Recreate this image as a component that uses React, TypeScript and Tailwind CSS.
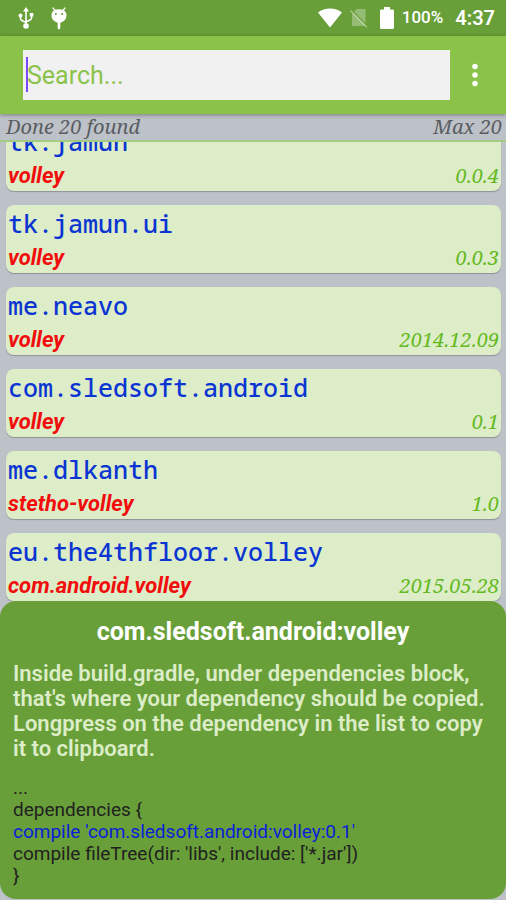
import { MdMoreVert } from 'react-icons/md';

type Dependency = { group: string; artifact: string; version: string };

const results: Dependency[] = [
  { group: 'tk.jamun', artifact: 'volley', version: '0.0.4' },
  { group: 'tk.jamun.ui', artifact: 'volley', version: '0.0.3' },
  { group: 'me.neavo', artifact: 'volley', version: '2014.12.09' },
  { group: 'com.sledsoft.android', artifact: 'volley', version: '0.1' },
  { group: 'me.dlkanth', artifact: 'stetho-volley', version: '1.0' },
  { group: 'eu.the4thfloor.volley', artifact: 'com.android.volley', version: '2015.05.28' },
];

function UsbIcon() {
  return (
    <svg width="16" height="24" viewBox="0 0 16 24" fill="none" aria-hidden="true">
      <path d="M8 5v15M2.500 10v2.500c0 1 .5 1.700 1.500 2L8 16.500M13.500 9v3c0 1-.5 1.500-1.500 2L8 16" stroke="white" strokeWidth="1.600" />
      <path d="M8 1l3 4.500H5z" fill="white" />
      <circle cx="2.500" cy="9.500" r="2" fill="white" />
      <path d="M11.700 7h3.600v3.600h-3.600z" fill="white" />
      <circle cx="8" cy="20" r="2.800" fill="white" />
    </svg>
  );
}

function DebugIcon() {
  return (
    <svg width="18" height="24" viewBox="0 0 18 24" fill="none" aria-hidden="true">
      <path d="M3 2l2.500 3M15 2l-2.500 3" stroke="white" strokeWidth="1.300" strokeLinecap="round" />
      <path
        d="M1.800 7C3 4.200 5.800 3.200 9 3.200s6 1 7.200 3.800c1 3.600-.3 6.600-3.200 8.500-1.200.8-2.500 1.200-4 1.200s-2.800-.4-4-1.200C2.100 13.600.8 10.600 1.800 7z"
        fill="white"
      />
      <path d="M9 16v6" stroke="white" strokeWidth="2.600" strokeLinecap="round" />
      <circle cx="5.800" cy="8" r="1" fill="#689f38" />
      <circle cx="12.200" cy="8" r="1" fill="#689f38" />
    </svg>
  );
}

function WifiIcon() {
  return (
    <svg width="24" height="20" viewBox="0 0 24 20" fill="white" aria-hidden="true">
      <path d="M0 4.500C3.400 1.900 7.500.5 12 .5s8.600 1.400 12 4L12 19.500z" />
    </svg>
  );
}

function NoSimIcon() {
  return (
    <svg width="18" height="20" viewBox="0 0 18 20" aria-hidden="true">
      <path d="M6.500 1h9v17H2V6z" fill="white" opacity="0.3" />
      <path d="M1.500 2l16 16.500" stroke="#689f38" strokeWidth="1.500" />
      <path d="M.5 2.500l16.500 17" stroke="white" strokeWidth="1.400" opacity="0.4" />
    </svg>
  );
}

function BatteryIcon() {
  return (
    <svg width="14" height="22" viewBox="0 0 14 22" fill="white" aria-hidden="true">
      <path d="M4 0h6v2.500h2.500c.8 0 1.500.6 1.500 1.400v16.600c0 .8-.7 1.500-1.500 1.500h-11C.7 22 0 21.300 0 20.500V3.900c0-.8.7-1.400 1.500-1.400H4z" />
    </svg>
  );
}

function StatusBar() {
  return (
    <div className="flex h-9 items-center bg-[#689f38] pr-[11px] pl-[18px] text-white">
      <UsbIcon />
      <div className="ml-4">
        <DebugIcon />
      </div>
      <div className="ml-auto flex items-center">
        <WifiIcon />
        <div className="ml-2">
          <NoSimIcon />
        </div>
        <div className="ml-3">
          <BatteryIcon />
        </div>
      </div>
      <span className="ml-2 text-[17px] font-medium">100%</span>
      <span className="ml-3 text-xl font-semibold">4:37</span>
    </div>
  );
}

function SearchBar() {
  return (
    <header className="relative z-10 flex h-[78px] items-center bg-[#8bc34a] pr-3.5 pl-[23px] shadow-[0_1px_4px_rgba(0,0,0,0.35)]">
      <div className="relative flex-1">
        <input
          type="text"
          aria-label="Search"
          placeholder="Search..."
          className="block h-[50px] w-full bg-[#f1f1f1] px-1 text-[25px] text-[#558b2f] outline-none placeholder:text-[#8bc34a] placeholder:opacity-100"
        />
        <span className="absolute top-[7px] left-[3px] h-[35px] w-0.5 bg-[#7c4dff]" />
      </div>
      <button type="button" aria-label="More options" className="ml-2 text-white">
        <MdMoreVert size={34} />
      </button>
    </header>
  );
}

function ResultCard({ item }: { item: Dependency }) {
  return (
    <li className="h-[68px] rounded-lg bg-[#dcedc8] px-0.5 shadow-[0_1px_1px_rgba(0,0,0,0.25)]">
      <p className="font-['Noto_Sans_Mono','DejaVu_Sans_Mono',monospace] text-[25px] leading-9 font-medium text-[#0b35d3]">
        {item.group}
      </p>
      <div className="flex items-baseline justify-between pt-1 leading-[26px]">
        <span className="text-[22px] font-bold text-[#f20d0d] italic">{item.artifact}</span>
        <span className="font-['Noto_Serif','DejaVu_Serif_Condensed','DejaVu_Serif',serif] text-[20px] text-[#64b91e] italic">
          {item.version}
        </span>
      </div>
    </li>
  );
}

function HelpPanel() {
  return (
    <section className="rounded-2xl bg-[#689f38] px-[13px] pt-4 pb-3">
      <h1 className="text-center text-[25px] leading-[30px] font-bold text-white">com.sledsoft.android:volley</h1>
      <p className="mt-3.5 text-[22px] leading-[25px] font-semibold text-[#dcedc8]">
        Inside build.gradle, under dependencies block, that's where your dependency should be copied. Longpress on the
        dependency in the list to copy it to clipboard.
      </p>
      <div className="mt-4 text-[19px] leading-[22px] text-[#212121]">
        <p>...</p>
        <p>dependencies {'{'}</p>
        <p className="text-[#0b1fd8]">compile 'com.sledsoft.android:volley:0.1'</p>
        <p>compile fileTree(dir: 'libs', include: ['*.jar'])</p>
        <p>{'}'}</p>
      </div>
    </section>
  );
}

export default function App() {
  return (
    <div className="min-h-screen bg-[#bdc1c8] font-[Roboto,sans-serif]">
      <StatusBar />
      <SearchBar />
      <div className="flex h-7 items-center justify-between border-b-2 border-[#a3cb83] pr-1 pl-1.5 font-['Noto_Serif','DejaVu_Serif_Condensed','DejaVu_Serif',serif] text-[20px] leading-[26px] text-[#5a5d61] italic">
        <span>Done 20 found</span>
        <span>Max 20</span>
      </div>
      <main className="overflow-hidden pr-[5px] pl-1.5">
        {/* list is scrolled a little past the first card */}
        <ul className="-mt-[19px] flex flex-col gap-3.5">
          {results.map((item) => (
            <ResultCard key={item.group} item={item} />
          ))}
        </ul>
      </main>
      <HelpPanel />
    </div>
  );
}
